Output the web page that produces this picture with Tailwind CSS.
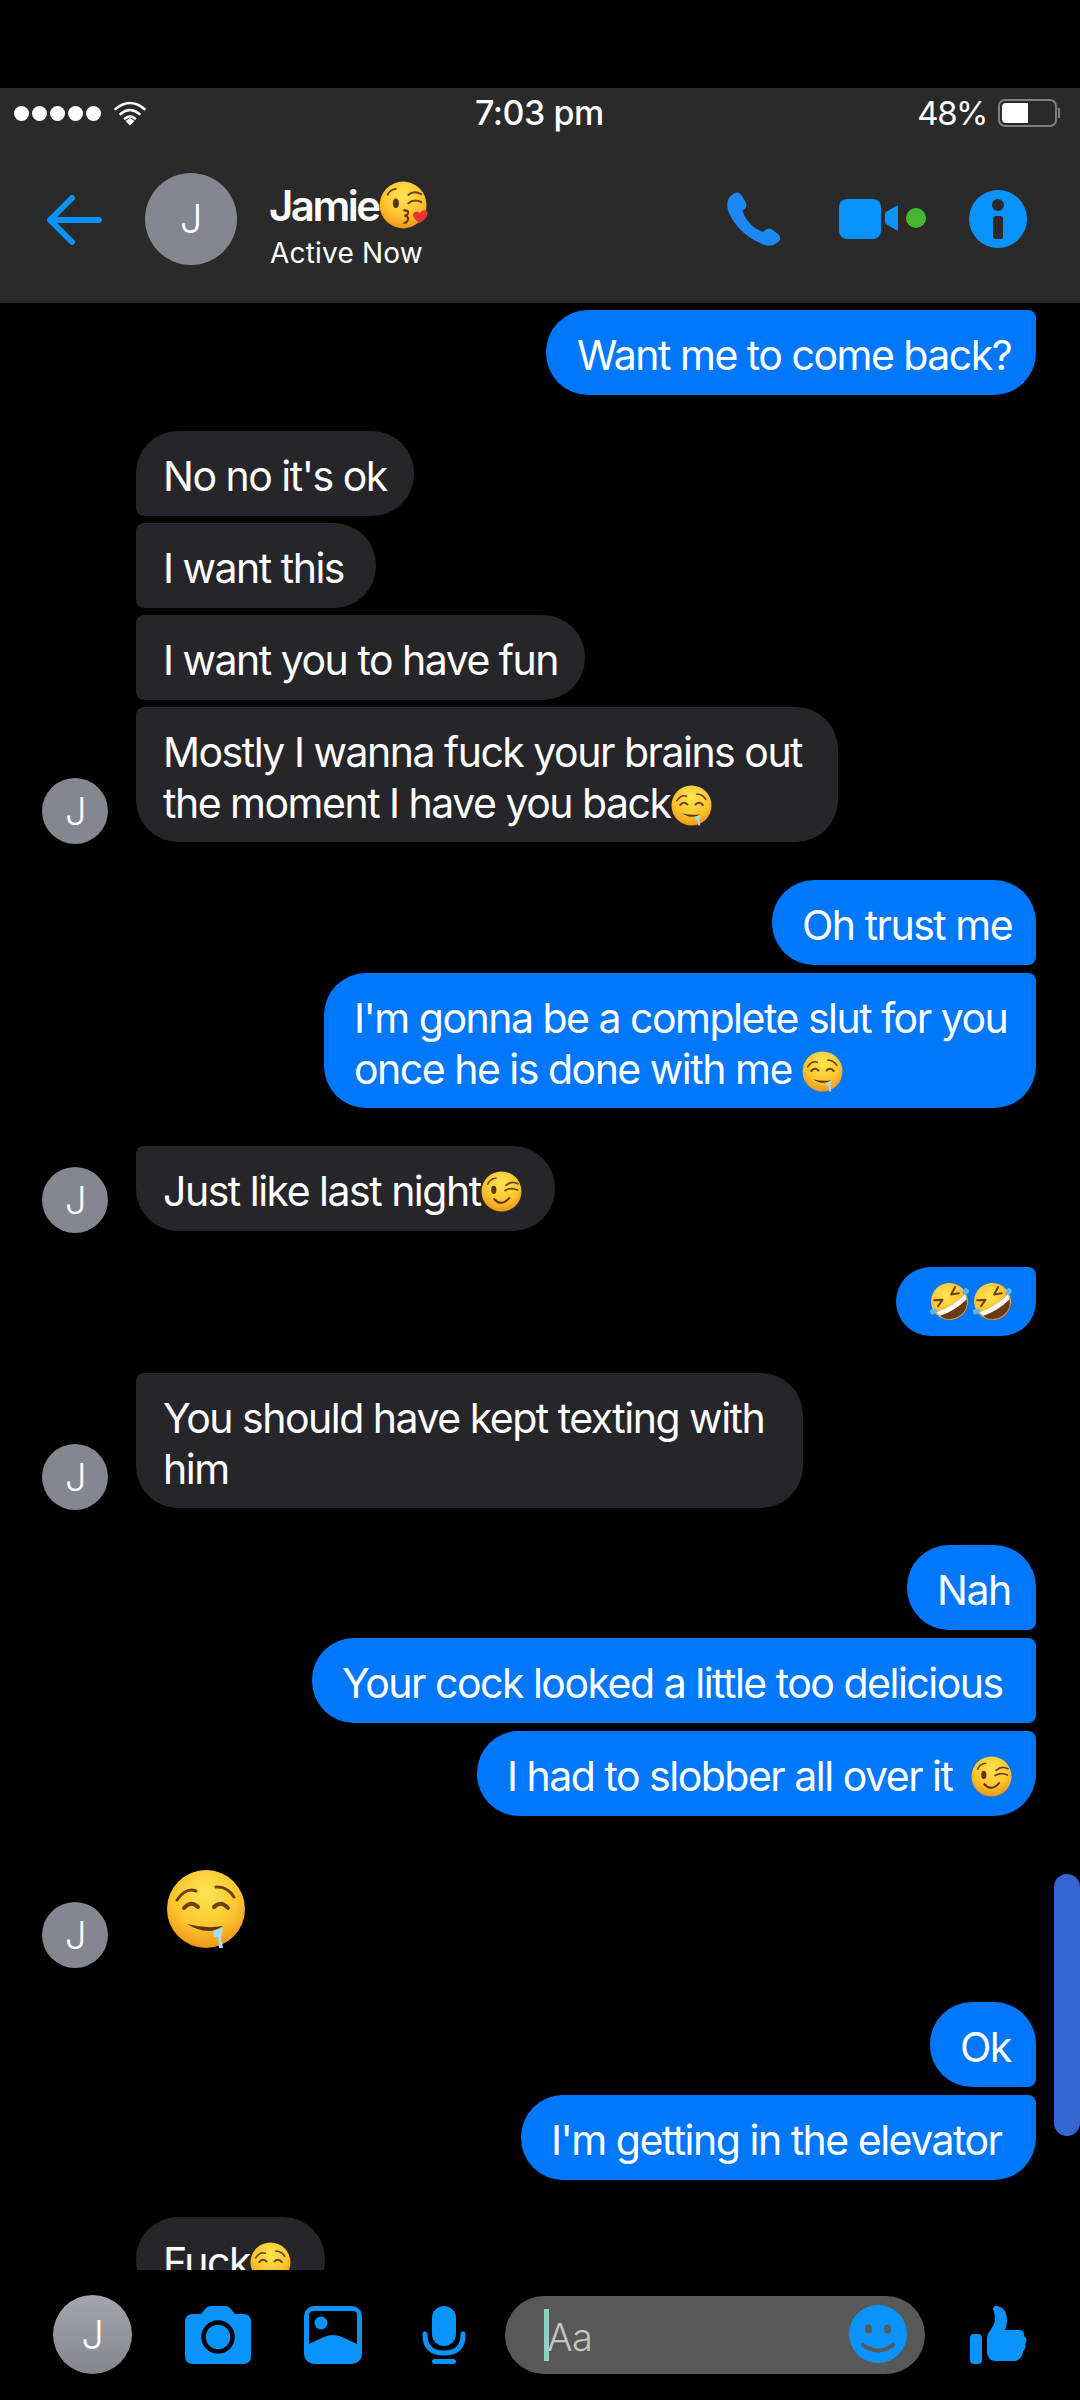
<!DOCTYPE html>
<html><head><meta charset="utf-8">
<script src="https://cdn.jsdelivr.net/npm/@tailwindcss/browser@4"></script>
</head>
<body class="bg-black">
<svg width="0" height="0" class="absolute">
<defs>
<radialGradient id="fy" cx="50%" cy="30%" r="72%"><stop offset="0" stop-color="#ffe552"/><stop offset="0.6" stop-color="#fdc52e"/><stop offset="1" stop-color="#ee9418"/></radialGradient>
<symbol id="drool" viewBox="0 0 80 80">
<circle cx="40" cy="40" r="39" fill="url(#fy)"/>
<path d="M11 31Q20 18 30 22M50 18Q61 17 68 28" fill="none" stroke="#6b4210" stroke-width="3" stroke-linecap="round"/>
<path d="M18 39Q25 31 32 38M48 38Q55 31 62 39" fill="none" stroke="#6b4210" stroke-width="4" stroke-linecap="round"/>
<path d="M21 55Q40 60 57 57Q42 68 21 55Z" fill="#5b3510"/>
<path d="M47 62L57 59L55 68L57 79L53 79L52 68L48 68Z" fill="#a5def5"/>
</symbol>
<symbol id="wink" viewBox="0 0 80 80">
<circle cx="40" cy="40" r="39" fill="url(#fy)"/>
<path d="M13 26Q17 15 29 14" fill="none" stroke="#6b4210" stroke-width="3" stroke-linecap="round"/>
<ellipse cx="25" cy="37" rx="5" ry="8" fill="#5b3510"/>
<path d="M49 28Q60 18 72 25M47 38Q58 31 71 37" fill="none" stroke="#6b4210" stroke-width="3.5" stroke-linecap="round"/>
<path d="M26 55Q40 70 55 53" fill="none" stroke="#5b3510" stroke-width="4" stroke-linecap="round"/>
</symbol>
<symbol id="kiss" viewBox="0 0 88 80">
<circle cx="40" cy="40" r="39" fill="url(#fy)"/>
<path d="M14 23Q18 14 28 13" fill="none" stroke="#6b4210" stroke-width="3" stroke-linecap="round"/>
<ellipse cx="28" cy="37" rx="5" ry="8" fill="#5b3510"/>
<path d="M49 23Q58 15 70 22M49 37Q58 29 70 35" fill="none" stroke="#6b4210" stroke-width="3.5" stroke-linecap="round"/>
<path d="M42 49Q52 49 47 56Q44 58 42 58Q52 60 47 67Q45 70 42 70" fill="none" stroke="#6b3010" stroke-width="3.5" stroke-linecap="round"/>
<path d="M68 70C58 63 56 59 57 55C58 50 65 49 68 54C71 48 79 47 81 52C82 58 77 64 68 70Z" fill="#e5352d"/>
</symbol>
<symbol id="rofl" viewBox="0 0 84 80">
<g transform="rotate(-32 42 40)">
<circle cx="42" cy="40" r="36" fill="url(#fy)"/>
<path d="M18 22L32 30L18 36M66 22L52 30L66 36" fill="none" stroke="#6b4210" stroke-width="4" stroke-linecap="round" stroke-linejoin="round"/>
<path d="M9 44Q42 52 75 44Q70 74 42 74Q14 74 9 44Z" fill="#6b3a10"/>
<path d="M9 44Q42 52 75 44Q74 52 72 54Q42 61 12 54Q10 50 9 44Z" fill="#fff"/>
<path d="M1 34C7 34 11 37 13 42C8 47 1 46 -2 42C-2 39 0 36 1 34Z" fill="#5fb6ee"/>
<path d="M83 34C77 34 73 37 71 42C76 47 83 46 86 42C86 39 84 36 83 34Z" fill="#5fb6ee"/>
</g>
</symbol>
</defs>
</svg>

<div class="relative w-[1080px] h-[2400px] bg-black overflow-hidden flex flex-col text-white font-['Inter','Liberation_Sans',sans-serif]">
  <div class="h-[88px] shrink-0"></div>

  <header class="h-[215px] shrink-0 bg-[#2a2a2a] flex flex-col">
    <div class="h-[50px] shrink-0 relative flex items-center justify-between pl-[14px] pr-[20px]">
      <div class="flex items-center">
        <div class="flex gap-[3px]">
          <span class="w-[15px] h-[15px] rounded-full bg-white"></span><span class="w-[15px] h-[15px] rounded-full bg-white"></span><span class="w-[15px] h-[15px] rounded-full bg-white"></span><span class="w-[15px] h-[15px] rounded-full bg-white"></span><span class="w-[15px] h-[15px] rounded-full bg-white"></span>
        </div>
        <svg class="ml-[13px] w-[32px] h-[26px]" viewBox="0 0 32 26"><path d="M1.500 9Q16 -3 30.500 9M6.500 14Q16 6 25.500 14M11 18.500Q16 14.500 21 18.500" fill="none" stroke="#fff" stroke-width="2.600" stroke-linecap="round"/><path d="M11.500 21L16 18L20.500 21L16 25.500Z" fill="#fff"/></svg>
      </div>
      <span class="absolute left-[475px] text-[34px] font-medium leading-[40px] tracking-[-0.5px]">7:03 pm</span>
      <div class="flex items-center">
        <span class="text-[33px] leading-[40px] mr-[11px] tracking-[-1.5px]">48%</span>
        <div class="w-[59px] h-[28px] rounded-[7px] border-2 border-[#808080] p-[2px]"><div class="w-[26px] h-full bg-white rounded-l-[4px]"></div></div>
        <div class="w-[2px] h-[10px] bg-[#808080] ml-[1px]"></div>
      </div>
    </div>
    <div class="relative flex-1 flex items-center">
      <svg class="absolute left-[46px] top-[57px] w-[56px] h-[50px]" viewBox="0 0 56 50"><path d="M53 25H4M26 3L4 25L26 47" fill="none" stroke="#0a93f5" stroke-width="6" stroke-linecap="round" stroke-linejoin="round"/></svg>
      <div class="absolute left-[145px] top-[35px] w-[92px] h-[92px] rounded-full bg-[#848790] flex items-center justify-center text-[40px] font-light">J</div>
      <div class="absolute left-[269px] top-[39px] flex items-center h-[56px]">
        <span class="text-[42px] font-semibold tracking-[-2.5px]">Jamie</span>
        <svg class="w-[53px] h-[48px]"><use href="#kiss"/></svg>
      </div>
      <div class="absolute left-[270px] top-[95px] text-[28px] tracking-[0.2px] leading-[40px]">Active Now</div>
      <svg class="absolute left-[726px] top-[53px] w-[56px] h-[56px]" viewBox="0 0 56 56"><path d="M8 2.500C11 0.500 14 1.500 16 5L20 12C21 15 20 17 16.500 20C19 29 28 38 37 41C40 38 43 36.500 46 38.500L52 43C55 45.500 55 49 52 51C47 55.500 42 56 34 52C20 46 8 34 2.500 21C0 12 1 7 8 2.500Z" fill="#1e88f5"/></svg>
      <div class="absolute left-[839px] top-[61px] w-[42px] h-[40px] rounded-[8px] bg-[#0a93fb]"></div>
      <svg class="absolute left-[885px] top-[67px] w-[14px] h-[26px]" viewBox="0 0 14 26"><path d="M13 1.500V24.500Q13 26 11 25L1 19Q0 18.500 0 17V9Q0 7.500 1 7L11 1Q13 0 13 1.500Z" fill="#0a93fb"/></svg>
      <div class="absolute left-[906px] top-[70px] w-[20px] h-[20px] rounded-full bg-[#44b62f]"></div>
      <svg class="absolute left-[969px] top-[52px] w-[58px] h-[58px]" viewBox="0 0 58 58"><circle cx="29" cy="29" r="29" fill="#0a93fb"/><circle cx="29" cy="15" r="6" fill="#2a2a2a"/><rect x="24" y="26" width="10" height="23" rx="2.500" fill="#2a2a2a"/></svg>
    </div>
  </header>

  <main class="flex-1 min-h-0 overflow-hidden flex flex-col *:shrink-0 pt-[7px] text-[41px] tracking-[-1.5px] leading-[50.5px]">
    <div class="self-end mr-[44px] w-[490px] h-[85px] flex items-center pl-[31px] pt-[6px] bg-[#0177fb] rounded-[42px] rounded-tr-[8px]">Want me to come back?</div>

    <div class="mt-[36px] ml-[136px] w-[278px] h-[85px] flex items-center pl-[27px] pt-[6px] bg-[#26252a] rounded-[42px] rounded-bl-[8px]">No no it's ok</div>
    <div class="mt-[7px] ml-[136px] w-[240px] h-[85px] flex items-center pl-[27px] pt-[6px] bg-[#26252a] rounded-r-[42px] rounded-l-[8px]">I want this</div>
    <div class="mt-[7px] ml-[136px] w-[449px] h-[85px] flex items-center pl-[27px] pt-[6px] bg-[#26252a] rounded-r-[42px] rounded-l-[8px]">I want you to have fun</div>
    <div class="mt-[7px] flex items-end">
      <div class="ml-[42px] -mb-[2px] w-[66px] h-[66px] rounded-full bg-[#848790] flex items-center justify-center text-[38px] font-light">J</div>
      <div class="ml-[28px] w-[702px] h-[135px] pl-[27px] pt-[20px] whitespace-nowrap bg-[#26252a] rounded-[42px] rounded-tl-[8px]">Mostly I wanna fuck your brains out<br>the moment I have you back<svg class="inline-block w-[41px] h-[41px] align-[-8px]"><use href="#drool"/></svg></div>
    </div>

    <div class="mt-[38px] self-end mr-[44px] w-[264px] h-[85px] flex items-center pl-[30px] pt-[6px] bg-[#0177fb] rounded-[42px] rounded-br-[8px]">Oh trust me</div>
    <div class="mt-[8px] self-end mr-[44px] w-[712px] h-[135px] pl-[30px] pt-[20px] whitespace-nowrap bg-[#0177fb] rounded-[42px] rounded-tr-[8px]">I'm gonna be a complete slut for you<br>once he is done with me <svg class="inline-block w-[41px] h-[41px] align-[-8px]"><use href="#drool"/></svg></div>

    <div class="mt-[38px] flex items-end">
      <div class="ml-[42px] -mb-[2px] w-[66px] h-[66px] rounded-full bg-[#848790] flex items-center justify-center text-[38px] font-light">J</div>
      <div class="ml-[28px] w-[419px] h-[85px] flex items-center pl-[27px] pt-[6px] whitespace-nowrap bg-[#26252a] rounded-[42px] rounded-tl-[8px]">Just like last night<svg class="w-[41px] h-[41px]"><use href="#wink"/></svg></div>
    </div>

    <div class="mt-[36px] self-end mr-[44px] w-[140px] h-[69px] flex items-center pl-[32px] bg-[#0177fb] rounded-[35px] rounded-tr-[8px]"><svg class="w-[43px] h-[41px]"><use href="#rofl"/></svg><svg class="w-[43px] h-[41px]"><use href="#rofl"/></svg></div>

    <div class="mt-[37px] flex items-end">
      <div class="ml-[42px] -mb-[2px] w-[66px] h-[66px] rounded-full bg-[#848790] flex items-center justify-center text-[38px] font-light">J</div>
      <div class="ml-[28px] w-[667px] h-[135px] pl-[27px] pt-[20px] whitespace-nowrap bg-[#26252a] rounded-[42px] rounded-tl-[8px]">You should have kept texting with<br>him</div>
    </div>

    <div class="mt-[37px] self-end mr-[44px] w-[129px] h-[85px] flex items-center pl-[30px] pt-[6px] bg-[#0177fb] rounded-[42px] rounded-br-[8px]">Nah</div>
    <div class="mt-[8px] self-end mr-[44px] w-[724px] h-[85px] flex items-center pl-[30px] pt-[6px] whitespace-nowrap bg-[#0177fb] rounded-l-[42px] rounded-r-[8px]">Your cock looked a little too delicious</div>
    <div class="mt-[8px] self-end mr-[44px] w-[559px] h-[85px] flex items-center pl-[30px] pt-[6px] whitespace-nowrap bg-[#0177fb] rounded-[42px] rounded-tr-[8px]">I had to slobber all over it<svg class="ml-[19px] w-[41px] h-[41px]"><use href="#wink"/></svg></div>

    <div class="mt-[53px] flex items-end h-[99px]">
      <div class="ml-[42px] w-[66px] h-[66px] rounded-full bg-[#848790] flex items-center justify-center text-[38px] font-light">J</div>
      <svg class="ml-[58px] mb-[19px] w-[80px] h-[80px]"><use href="#drool"/></svg>
    </div>

    <div class="mt-[34px] self-end mr-[44px] w-[106px] h-[85px] flex items-center pl-[30px] pt-[6px] bg-[#0177fb] rounded-[42px] rounded-br-[8px]">Ok</div>
    <div class="mt-[8px] self-end mr-[44px] w-[515px] h-[85px] flex items-center pl-[30px] pt-[6px] whitespace-nowrap bg-[#0177fb] rounded-[42px] rounded-tr-[8px]">I'm getting in the elevator</div>

    <div class="mt-[37px] ml-[136px] w-[189px] h-[85px] flex items-center pl-[27px] pt-[6px] whitespace-nowrap bg-[#26252a] rounded-[42px]">Fuck<svg class="w-[41px] h-[41px]"><use href="#drool"/></svg></div>
  </main>

  <footer class="h-[130px] shrink-0 relative">
    <div class="absolute left-[53px] top-[25px] w-[79px] h-[79px] rounded-full bg-gradient-to-b from-[#a3a6ae] to-[#84868e] flex items-center justify-center text-[40px] font-light">J</div>
    <svg class="absolute left-[185px] top-[36px] w-[66px] h-[58px]" viewBox="0 0 66 58"><path d="M8 8H16L21 2Q23 0 26 0H40Q43 0 45 2L50 8H58Q66 8 66 16V50Q66 58 58 58H8Q0 58 0 50V16Q0 8 8 8Z" fill="#0a93fb"/><circle cx="33" cy="31" r="14.500" fill="#0a93fb" stroke="#000" stroke-width="4.500"/></svg>
    <svg class="absolute left-[304px] top-[36px] w-[58px] h-[58px]" viewBox="0 0 58 58"><rect width="58" height="58" rx="10" fill="#0a93fb"/><path d="M9 5H49Q53 5 53 9V38L38 31Q29 27 20 31L5 38V9Q5 5 9 5Z" fill="#000"/><circle cx="17" cy="17" r="6.500" fill="#0a93fb"/></svg>
    <svg class="absolute left-[422px] top-[36px] w-[44px] h-[58px]" viewBox="0 0 44 58"><rect x="10" y="0" width="24" height="40" rx="12" fill="#0a93fb"/><path d="M3 28V29Q3 47 22 47Q41 47 41 29V28" fill="none" stroke="#0a93fb" stroke-width="5" stroke-linecap="round"/><rect x="10" y="53" width="24" height="5" rx="2.500" fill="#0a93fb"/></svg>
    <div class="absolute left-[505px] top-[26px] w-[420px] h-[78px] rounded-full bg-[#585858]">
      <div class="absolute left-[39px] top-[13px] w-[5px] h-[52px] bg-[#8fd0c5]"></div>
      <span class="absolute left-[42px] top-[18px] text-[38px] leading-[46px] font-light tracking-[-0.5px] text-[#c4c4c4]">Aa</span>
      <svg class="absolute left-[344px] top-[9px] w-[58px] h-[58px]" viewBox="0 0 58 58"><circle cx="29" cy="29" r="29" fill="#0a93fb"/><ellipse cx="19.500" cy="24" rx="3.500" ry="4.500" fill="#585858"/><ellipse cx="38.500" cy="24" rx="3.500" ry="4.500" fill="#585858"/><path d="M14 40Q29 51 44 40" fill="none" stroke="#585858" stroke-width="4" stroke-linecap="round"/></svg>
    </div>
    <svg class="absolute left-[970px] top-[36px] w-[57px] h-[58px]" viewBox="0 0 57 58"><rect x="0" y="28" width="12" height="30" rx="4" fill="#0a93fb"/><path d="M26 0C32 0 37 5 37 14C37 18 36 21 35 24H49C53 24 55 27 54 30C57 32 57 36 55 38C56 41 55 44 53 45C53 49 50 55 44 55H26C20 55 17 51 17 45V33C17 28 20 25 23 20C26 15 25 8 23 3C23 1 24 0 26 0Z" fill="#0a93fb"/></svg>
  </footer>

  <div class="absolute left-[1054px] top-[1874px] w-[26px] h-[262px] rounded-[13px] bg-[#3565d0]"></div>
</div>
</body></html>
